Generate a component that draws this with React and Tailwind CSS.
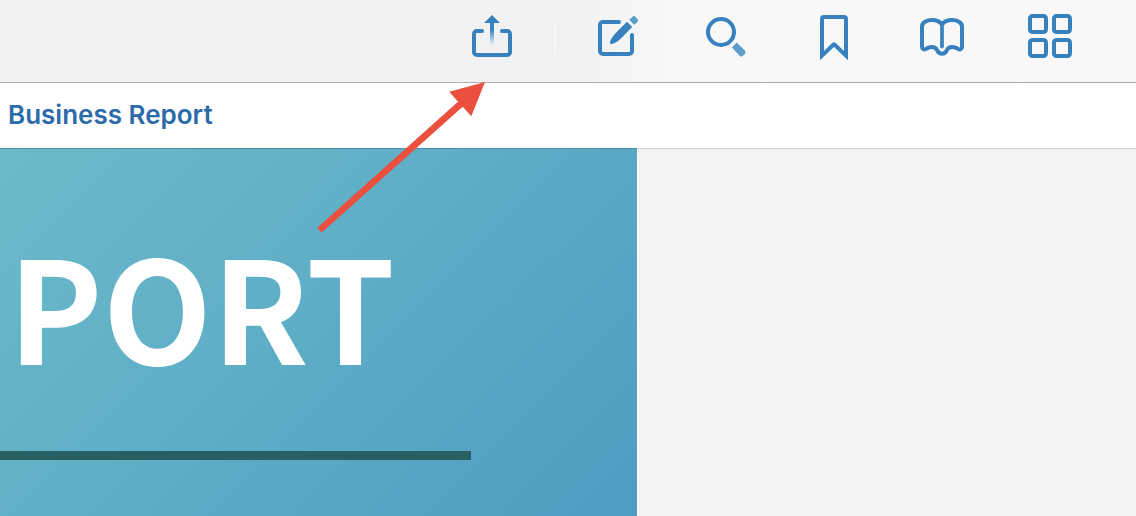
import React from "react";

function Icon({ children }) {
  return (
    <svg
      viewBox="0 0 48 48"
      className="size-12 shrink-0"
      fill="none"
      stroke="currentColor"
      strokeWidth="4"
      aria-hidden="true"
    >
      {children}
    </svg>
  );
}

function ShareIcon() {
  return (
    <Icon>
      <defs>
        <linearGradient id="stem" x1="0" y1="10" x2="0" y2="32" gradientUnits="userSpaceOnUse">
          <stop offset="0.3" stopColor="#3781bf" />
          <stop offset="1" stopColor="#3781bf" stopOpacity="0" />
        </linearGradient>
      </defs>
      <path
        strokeLinecap="round"
        d="M14 18H9a3 3 0 0 0-3 3v18a3 3 0 0 0 3 3h30a3 3 0 0 0 3-3V21a3 3 0 0 0-3-3h-5"
      />
      <path stroke="none" fill="currentColor" d="M24 2l8 8H16z" />
      <rect x="22" y="10" width="4" height="22" stroke="none" fill="url(#stem)" />
    </Icon>
  );
}

function EditIcon() {
  return (
    <Icon>
      <path
        strokeLinecap="round"
        d="M25 9H9a3 3 0 0 0-3 3v26a3 3 0 0 0 3 3h26a3 3 0 0 0 3-3V22"
      />
      <path
        stroke="none"
        fill="currentColor"
        d="M33 8.700L38.200 14L27.700 24.700C24 28.300 20 31 17 31Q16 31 16 30C16 27 19 23 22.200 19.500z"
      />
      <path
        stroke="none"
        fill="#5b9dcb"
        d="M39.200 3.200Q40 2.400 40.800 3.200L43.800 6.700Q44.600 7.600 43.800 8.400L40.300 11.900L35.200 6.700z"
      />
    </Icon>
  );
}

function SearchIcon() {
  return (
    <Icon>
      <circle cx="19" cy="19" r="13" />
      <path
        stroke="none"
        fill="#5b9dcb"
        d="M34.700 29.600L43 37.700Q44.200 39 43 40.700L40.800 43Q39.200 44.200 37.800 43L30 34.600Q30 34.200 30.300 33.900z"
      />
    </Icon>
  );
}

function BookmarkIcon() {
  return (
    <Icon>
      <path d="M12 42.600V6a2 2 0 0 1 2-2h20a2 2 0 0 1 2 2v36.600L24.700 31.700q-.7-.6-1.400 0z" />
    </Icon>
  );
}

function BookIcon() {
  return (
    <Icon>
      <path
        strokeLinejoin="round"
        d="M24 11.500C22 8.700 18 7 14 7C9 7 4 9.500 4 13.500V33.800c0 2.200 1.700 3.200 3.700 2.200C9.700 34.800 11.500 34 13.700 34c2.700 0 4.400 1 5.300 3c1 2.500 2.500 3.700 5 3.700s4-1.200 5-3.700c.9-2 2.600-3 5.300-3c2.200 0 4 .8 6 2c2 1 3.700 0 3.700-2.200V13.500C44 9.500 39 7 34 7C30 7 26 8.700 24 11.500z"
      />
      <path stroke="#5b9dcb" strokeWidth="4" strokeLinecap="round" d="M24 14V33.500" />
      <path strokeWidth="2.500" strokeLinecap="round" d="M24 12V33.500" />
    </Icon>
  );
}

function GridIcon() {
  return (
    <Icon>
      <rect x="4" y="3" width="16" height="16" rx="2.500" />
      <rect x="28" y="3" width="16" height="16" rx="2.500" />
      <rect x="4" y="27" width="16" height="16" rx="2.500" />
      <rect x="28" y="27" width="16" height="16" rx="2.500" />
    </Icon>
  );
}

function ToolButton({ label, children }) {
  return (
    <button type="button" aria-label={label} className="flex w-27 items-center justify-center">
      {children}
    </button>
  );
}

function Toolbar() {
  return (
    <header className="border-b border-[#adadad] bg-linear-to-r from-[#f2f2f2] from-10% via-[#f1f1f1] via-50% to-[#f8f8f8] to-60%">
      <div className="flex items-center justify-end pt-[13px] pr-8 pb-[21px] text-[#3781bf]">
        <ToolButton label="Share">
          <ShareIcon />
        </ToolButton>
        <div className="flex w-[18px] justify-center">
          <div className="h-8 w-0.5 bg-[#f7f7f7]" />
        </div>
        <ToolButton label="Edit">
          <EditIcon />
        </ToolButton>
        <ToolButton label="Search">
          <SearchIcon />
        </ToolButton>
        <ToolButton label="Bookmark">
          <BookmarkIcon />
        </ToolButton>
        <ToolButton label="Reading view">
          <BookIcon />
        </ToolButton>
        <ToolButton label="Thumbnails">
          <GridIcon />
        </ToolButton>
      </div>
    </header>
  );
}

export default function App() {
  return (
    <div className="relative flex min-h-screen flex-col overflow-hidden bg-[#f3f3f3] font-['Inter',sans-serif]">
      <Toolbar />
      <div className="bg-white px-2 pt-4 pb-[17px]">
        <a href="#report" className="text-[26px] leading-8 font-semibold text-[#2b6ba9]">
          Business Report
        </a>
      </div>
      <main id="report" className="flex grow">
        <article className="w-[637px] shrink-0 border-t border-[#4f8fa3] bg-linear-135 from-[#6cb9ca] via-[#5eaec6] via-45% to-[#4e9cc1]">
          <h1 className="pt-[86px] pl-2 font-['Noto_Sans_CJK_SC',sans-serif] text-[142px] leading-[136px] font-bold text-white">
            PORT
          </h1>
          <div className="mt-20 h-[9px] w-[471px] bg-[#275f63]" />
        </article>
        <div className="grow border-t border-l border-t-[#cccccc] border-l-white bg-[#f3f3f3]" />
      </main>
      <svg
        viewBox="0 0 168 151"
        className="pointer-events-none absolute top-[82px] left-[317px] h-[151px] w-[168px]"
        fill="#eb4f3d"
        aria-hidden="true"
      >
        <path d="M168 0L154.300 34.200L145.700 24.700L4.700 150.500L0.300 145.700L141 19.700L132.300 9.800z" />
      </svg>
    </div>
  );
}
